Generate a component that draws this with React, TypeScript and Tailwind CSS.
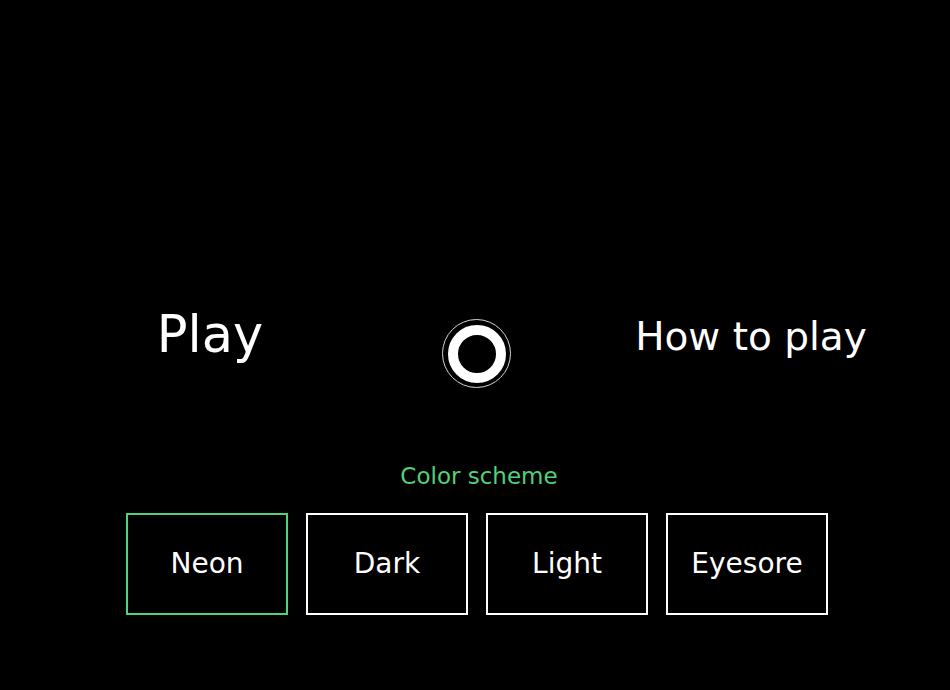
import { useState } from "react";

const schemes = ["Neon", "Dark", "Light", "Eyesore"];

export default function App() {
  const [scheme, setScheme] = useState("Neon");

  return (
    <div className="w-full h-[690px] bg-black text-white overflow-hidden font-['DejaVu_Sans',sans-serif] flex flex-col pt-[300px]">
      {/* ================= MENU PRINCIPAL ================= */}
      <div className="flex items-start">
        <button className="ml-[110px] w-[200px] mt-[9px] text-center text-[51px] leading-none cursor-pointer">
          Play
        </button>
        <div className="ml-[132px] mt-[19px] w-[69px] h-[69px] rounded-full border border-[#d4d4d4] flex items-center justify-center">
          <div className="w-[58px] h-[58px] rounded-full border-[10px] border-white" />
        </div>
        <button className="ml-[90px] w-[300px] mt-[17px] text-center text-[39px] leading-none cursor-pointer">
          How to play
        </button>
      </div>

      {/* ================= ESQUEMA DE CORES ================= */}
      <div className="ml-[128px] w-[702px] flex flex-col items-center">
        <p className="mt-[77px] text-[23px] leading-none text-[#52d07a]">
          Color scheme
        </p>
        <div className="mt-[25px] -ml-[4px] flex gap-[18px]">
          {schemes.map((nome) => (
            <button
              key={nome}
              onClick={() => setScheme(nome)}
              className={`w-[162px] h-[102px] border-2 flex items-center justify-center pb-[1px] text-[28px] leading-none cursor-pointer ${
                scheme === nome ? "border-[#52d07a]" : "border-white"
              }`}
            >
              {nome}
            </button>
          ))}
        </div>
      </div>
    </div>
  );
}
